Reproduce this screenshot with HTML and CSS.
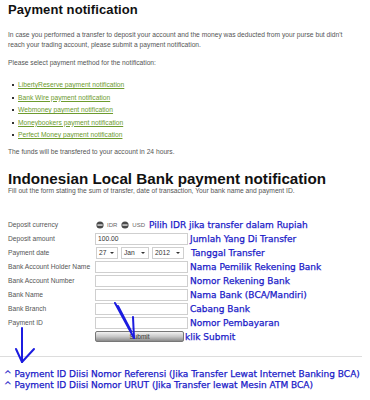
FILE: index.html
```html
<!DOCTYPE html>
<html>
<head>
<meta charset="utf-8">
<link rel="stylesheet" href="styles.css">
</head>
<body>
<div class="page">
  <h1 class="title">Payment notification</h1>
  <p class="txt intro">In case you performed a transfer to deposit your account and the money was deducted from your purse but didn't<br>reach your trading account, please submit a payment notification.</p>
  <p class="txt select">Please select payment method for the notification:</p>
  <ul class="methods">
    <li><a href="#">LibertyReserve payment notification</a></li>
    <li><a href="#">Bank Wire payment notification</a></li>
    <li><a href="#">Webmoney payment notification</a></li>
    <li><a href="#">Moneybookers payment notification</a></li>
    <li><a href="#">Perfect Money payment notification</a></li>
  </ul>
  <p class="txt funds">The funds will be transfered to your account in 24 hours.</p>
  <h2 class="title title2">Indonesian Local Bank payment notification</h2>
  <p class="txt fill">Fill out the form stating the sum of transfer, date of transaction, Your bank name and payment ID.</p>

  <div class="form">
    <div class="row">
      <span class="lbl">Deposit currency</span>
      <span class="radios">
        <svg class="radio" viewBox="0 0 8 8"><circle cx="4" cy="4" r="3.6" fill="#4a4a4a"/><rect x="1.4" y="3.4" width="5.2" height="1.3" fill="#e8e8e8"/></svg><span class="rl">IDR</span>
        <svg class="radio" viewBox="0 0 8 8"><circle cx="4" cy="4" r="3.6" fill="#4a4a4a"/><rect x="1.4" y="3.4" width="5.2" height="1.3" fill="#e8e8e8"/></svg><span class="rl">USD</span>
      </span>
      <span class="note note-r">Pilih IDR jika transfer dalam Rupiah</span>
    </div>
    <div class="row">
      <span class="lbl">Deposit amount</span>
      <span class="inp">100.00</span>
      <span class="note">Jumlah Yang Di Transfer</span>
    </div>
    <div class="row">
      <span class="lbl">Payment date</span>
      <span class="dates">
        <span class="sel s1">27<i class="caret"></i></span>
        <span class="sel s2">Jan<i class="caret"></i></span>
        <span class="sel s3">2012<i class="caret"></i></span>
      </span>
      <span class="note">Tanggal Transfer</span>
    </div>
    <div class="row">
      <span class="lbl">Bank Account Holder Name</span>
      <span class="inp"></span>
      <span class="note">Nama Pemilik Rekening Bank</span>
    </div>
    <div class="row">
      <span class="lbl">Bank Account Number</span>
      <span class="inp"></span>
      <span class="note">Nomor Rekening Bank</span>
    </div>
    <div class="row">
      <span class="lbl">Bank Name</span>
      <span class="inp"></span>
      <span class="note">Nama Bank (BCA/Mandiri)</span>
    </div>
    <div class="row">
      <span class="lbl">Bank Branch</span>
      <span class="inp"></span>
      <span class="note">Cabang Bank</span>
    </div>
    <div class="row">
      <span class="lbl">Payment ID</span>
      <span class="inp"></span>
      <span class="note">Nomor Pembayaran</span>
    </div>
    <div class="row">
      <span class="lbl"></span>
      <span class="btn">Submit</span>
      <span class="note note-s">klik Submit</span>
    </div>
  </div>
</div>
<hr class="rule">
<div class="foot">
  <div>^ Payment ID Diisi Nomor Referensi (Jika Transfer Lewat Internet Banking BCA)</div>
  <div>^ Payment ID Diisi Nomor URUT (Jika Transfer lewat Mesin ATM BCA)</div>
</div>
<svg class="arrows" width="370" height="400" viewBox="0 0 370 400">
  <g fill="none" stroke="#1c1ce0" stroke-width="2" stroke-linecap="round" stroke-linejoin="round">
    <path d="M22 328 L22 362"/>
    <path d="M16 349 L22 362 L34 349"/>
    <path d="M115 303 L134 338"/>
    <path d="M118 306 L131 331"/>
    <path d="M133 317 L134 338"/>
  </g>
</svg>
</body>
</html>
```
FILE: styles.css
```css
html, body {
  margin: 0;
  padding: 0;
  background: #fff;
}
body {
  position: relative;
  width: 370px;
  height: 400px;
  overflow: hidden;
  font-family: "Liberation Sans", Arial, sans-serif;
}
.page {
  padding: 0 0 0 8px;
}
.title {
  margin: 0;
  font-size: 13px;
  font-weight: bold;
  color: #111;
  line-height: 20px;
  letter-spacing: 0.1px;
}
.txt {
  margin: 0;
  font-size: 6.7px;
  color: #555;
  line-height: 10px;
  white-space: nowrap;
}
.intro { margin-top: 10px; }
.select { margin-top: 8px; }
.methods {
  list-style: none;
  margin: 11px 0 0 0;
  padding: 0 0 0 4px;
}
.methods li {
  font-size: 6.7px;
  line-height: 12.5px;
  height: 12.5px;
  display: flex;
  align-items: center;
  color: #333;
}
.methods li::before {
  content: "";
  width: 2px;
  height: 2px;
  background: #333;
  margin-right: 4px;
}
.methods a {
  color: #6d9b2e;
  text-decoration: underline;
}
.funds { margin-top: 5px; }
.title2 {
  margin-top: 14px;
  font-size: 15.2px;
  line-height: 16px;
  letter-spacing: 0;
}
.fill { margin-top: -1px; }

.form {
  margin-top: 22px;
}
.row {
  display: flex;
  align-items: center;
  height: 14px;
}
.lbl {
  width: 87px;
  flex: none;
  font-size: 6.7px;
  color: #555;
  white-space: nowrap;
}
.radios {
  display: flex;
  align-items: center;
  width: 54px;
  flex: none;
}
.radio {
  width: 8px;
  height: 8px;
  margin-left: 1px;
}
.rl {
  font-size: 6px;
  color: #666;
  margin: 0 3px 0 3px;
}
.inp {
  box-sizing: border-box;
  width: 93px;
  height: 12px;
  border: 1px solid #cfcfcf;
  background: #fff;
  font-size: 6.7px;
  color: #333;
  padding-left: 2px;
  line-height: 10px;
  flex: none;
}
.dates {
  display: flex;
  gap: 3px;
  width: 93px;
  flex: none;
  margin-left: 1px;
}
.sel {
  box-sizing: border-box;
  height: 12px;
  border: 1px solid #cfcfcf;
  font-size: 6.7px;
  color: #333;
  padding-left: 2px;
  line-height: 10px;
  display: flex;
  justify-content: space-between;
  align-items: center;
  padding-right: 3px;
}
.s1 { width: 22px; }
.s2 { width: 28px; }
.s3 { width: 32px; }
.caret {
  width: 0;
  height: 0;
  border-left: 2px solid transparent;
  border-right: 2px solid transparent;
  border-top: 2px solid #333;
}
.note {
  font-family: "DejaVu Sans", Verdana, sans-serif;
  font-size: 9px;
  color: #1a1ac8;
  -webkit-text-stroke: 0.25px #1a1ac8;
  margin-left: 2px;
  white-space: nowrap;
}
.note-r { margin-left: 0; }
.btn {
  box-sizing: border-box;
  width: 89px;
  height: 11px;
  border: 1px solid #777;
  border-radius: 2px;
  background: linear-gradient(#f2f2f2, #c8c8c8 50%, #8a8a8a);
  font-size: 6.5px;
  color: #333;
  text-align: center;
  line-height: 9px;
  flex: none;
}
.note-s { margin-left: 1px; }
.rule {
  margin: 12px 8px 0 0;
  border: 0;
  border-top: 1px solid #ddd;
  height: 0;
}
.foot {
  padding-left: 4px;
  margin-top: 12px;
  font-family: "DejaVu Sans", Verdana, sans-serif;
  font-size: 9px;
  line-height: 11px;
  color: #1a1ac8;
  -webkit-text-stroke: 0.25px #1a1ac8;
  white-space: nowrap;
}
.arrows {
  position: absolute;
  left: 0;
  top: 0;
  pointer-events: none;
}
```
